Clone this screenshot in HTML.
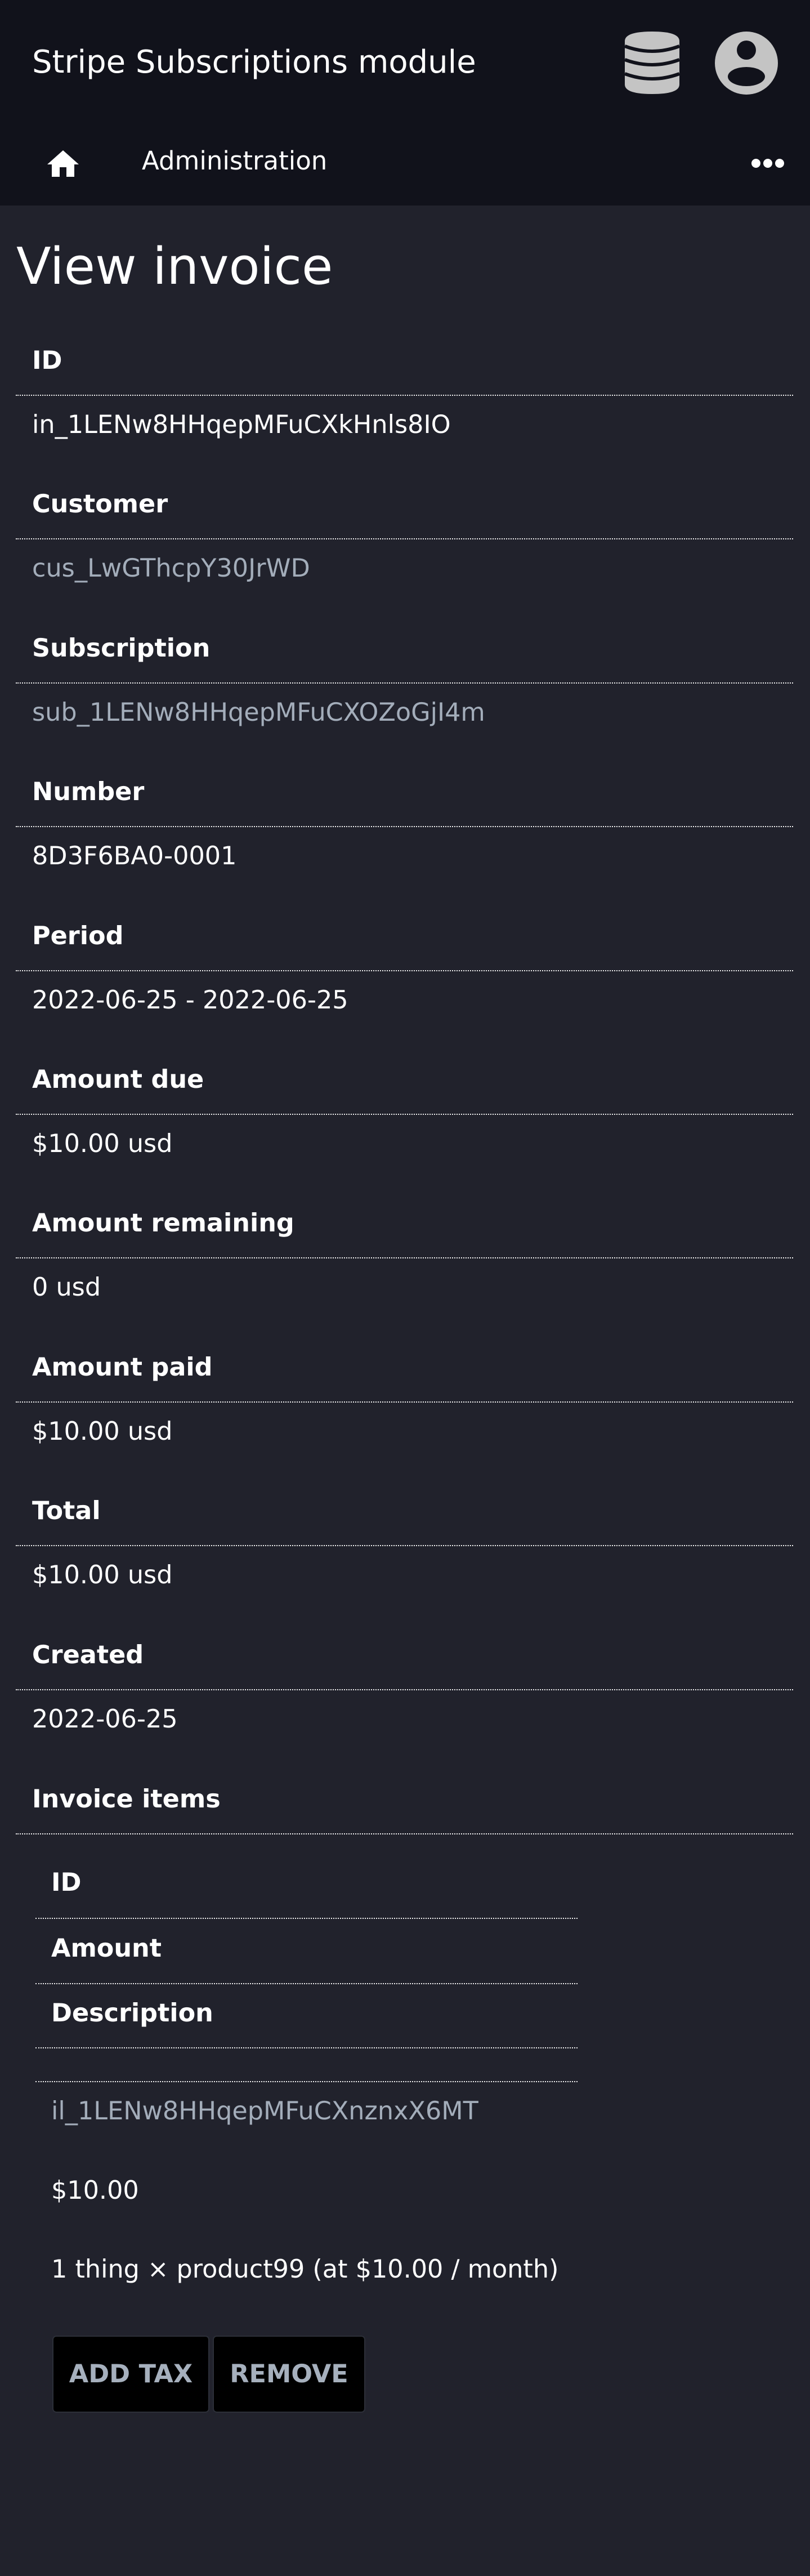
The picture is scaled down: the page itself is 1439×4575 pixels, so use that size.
<!DOCTYPE html>
<html><head><meta charset="utf-8"><style>
*{margin:0;padding:0;box-sizing:border-box}
body{width:1439px;height:4575px;background:#21222c;font-family:"DejaVu Sans","Liberation Sans",sans-serif;color:#fff;position:relative;overflow:hidden}
.hdr{position:absolute;left:0;top:0;width:1439px;height:365px;background:#11121b}
.t{position:absolute;white-space:nowrap;line-height:1}
.lb{font-weight:bold;font-size:44.5px}
.v{font-size:44.5px}
.lk{color:#a3adba}
.ln{position:absolute;border-top:2px dotted #f0f0f0;height:0}
.btn{position:absolute;top:4148px;height:137px;background:#000;border:2px solid #2c2f38;border-radius:7px;color:#a6b0bd;font-weight:bold;font-size:44.5px;line-height:133px;text-align:center}
</style></head><body>
<div class="hdr"></div>
<div class="t" style="left:57px;top:83px;font-size:56px">Stripe Subscriptions module</div>
<svg style="position:absolute;left:1110px;top:56px" width="97" height="111" viewBox="0 0 97 111">
<path d="M0 17 Q0 0 48.5 0 Q97 0 97 17 L97 94 Q97 111 48.5 111 Q0 111 0 94 Z" fill="#c4c4c4"/>
<path d="M0 26 Q48.5 44 97 26 M0 50 Q48.5 68 97 50 M0 75 Q48.5 93 97 75" stroke="#11121b" stroke-width="6" fill="none"/>
</svg>
<svg style="position:absolute;left:1270px;top:56px" width="112" height="112" viewBox="0 0 112 112">
<circle cx="56" cy="56" r="56" fill="#c4c4c4"/>
<circle cx="56" cy="33" r="17" fill="#11121b"/>
<ellipse cx="56" cy="80" rx="33" ry="17" fill="#11121b"/>
</svg>
<svg style="position:absolute;left:84px;top:267px" width="56" height="47" viewBox="0 0 56 47">
<path d="M28 0 L56 25 L48 25 L48 47 L34 47 L34 30 L22 30 L22 47 L8 47 L8 25 L0 25 Z" fill="#fff"/>
</svg>
<div class="t" style="left:252px;top:263px;font-size:45px">Administration</div>
<svg style="position:absolute;left:1335px;top:281px" width="58" height="18" viewBox="0 0 58 18">
<circle cx="8" cy="9" r="8" fill="#fff"/><circle cx="29" cy="9" r="8" fill="#fff"/><circle cx="50" cy="9" r="8" fill="#fff"/>
</svg>
<div class="t" style="left:29px;top:429px;font-size:90px">View invoice</div>

<div class="t lb" style="left:57px;top:619px">ID</div><div class="ln" style="left:28px;width:1381px;top:701px"></div><div class="t v" style="left:57px;top:733px">in_1LENw8HHqepMFuCXkHnls8IO</div>
<div class="t lb" style="left:57px;top:874px">Customer</div><div class="ln" style="left:28px;width:1381px;top:956px"></div><div class="t v lk" style="left:57px;top:988px">cus_LwGThcpY30JrWD</div>
<div class="t lb" style="left:57px;top:1130px">Subscription</div><div class="ln" style="left:28px;width:1381px;top:1212px"></div><div class="t v lk" style="left:57px;top:1244px">sub_1LENw8HHqepMFuCXOZoGjI4m</div>
<div class="t lb" style="left:57px;top:1385px">Number</div><div class="ln" style="left:28px;width:1381px;top:1467px"></div><div class="t v" style="left:57px;top:1499px">8D3F6BA0-0001</div>
<div class="t lb" style="left:57px;top:1641px">Period</div><div class="ln" style="left:28px;width:1381px;top:1723px"></div><div class="t v" style="left:57px;top:1755px">2022-06-25 - 2022-06-25</div>
<div class="t lb" style="left:57px;top:1896px">Amount due</div><div class="ln" style="left:28px;width:1381px;top:1978px"></div><div class="t v" style="left:57px;top:2010px">$10.00 usd</div>
<div class="t lb" style="left:57px;top:2151px">Amount remaining</div><div class="ln" style="left:28px;width:1381px;top:2233px"></div><div class="t v" style="left:57px;top:2265px">0 usd</div>
<div class="t lb" style="left:57px;top:2407px">Amount paid</div><div class="ln" style="left:28px;width:1381px;top:2489px"></div><div class="t v" style="left:57px;top:2521px">$10.00 usd</div>
<div class="t lb" style="left:57px;top:2662px">Total</div><div class="ln" style="left:28px;width:1381px;top:2744px"></div><div class="t v" style="left:57px;top:2776px">$10.00 usd</div>
<div class="t lb" style="left:57px;top:2918px">Created</div><div class="ln" style="left:28px;width:1381px;top:3000px"></div><div class="t v" style="left:57px;top:3032px">2022-06-25</div>
<div class="t lb" style="left:57px;top:3174px">Invoice items</div><div class="ln" style="left:28px;width:1381px;top:3256px"></div>

<div class="t lb" style="left:91px;top:3322px">ID</div><div class="ln" style="left:63px;width:963px;top:3406px"></div>
<div class="t lb" style="left:91px;top:3439px">Amount</div><div class="ln" style="left:63px;width:963px;top:3522px"></div>
<div class="t lb" style="left:91px;top:3554px">Description</div><div class="ln" style="left:63px;width:963px;top:3636px"></div>
<div class="ln" style="left:63px;width:963px;top:3696px"></div>
<div class="t v lk" style="left:91px;top:3728px">il_1LENw8HHqepMFuCXnznxX6MT</div>
<div class="t v" style="left:91px;top:3869px">$10.00</div>
<div class="t v" style="left:91px;top:4009px">1 thing × product99 (at $10.00 / month)</div>
<div class="btn" style="left:93px;width:279px">ADD TAX</div>
<div class="btn" style="left:378px;width:271px">REMOVE</div>
</body></html>
